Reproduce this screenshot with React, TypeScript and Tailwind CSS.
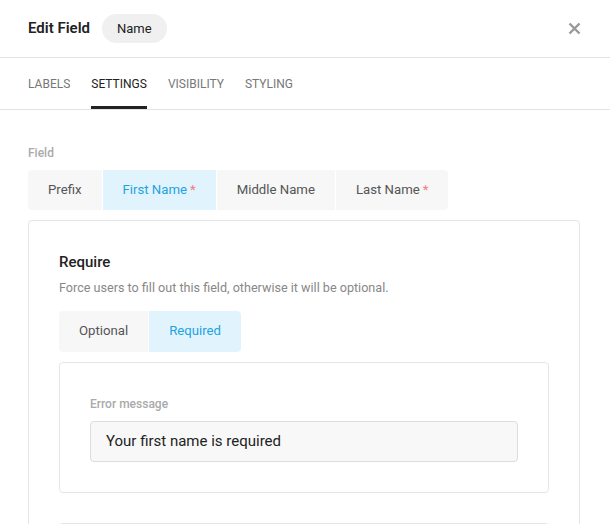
import { useState } from "react";

const tabs = ["Labels", "Settings", "Visibility", "Styling"];

const parts = [
  { name: "Prefix", required: false },
  { name: "First Name", required: true },
  { name: "Middle Name", required: false },
  { name: "Last Name", required: true },
];

function Segment({
  label,
  active,
  required,
  first,
  last,
  onClick,
}: {
  label: string;
  active: boolean;
  required?: boolean;
  first?: boolean;
  last?: boolean;
  onClick: () => void;
}) {
  return (
    <button
      onClick={onClick}
      className={`h-full px-[20px] text-[13.2px] ${first ? "rounded-l-[4px]" : ""} ${
        last ? "rounded-r-[4px]" : ""
      } ${active ? "bg-[#e1f4fd] text-[#1ea3df]" : "bg-[#f7f7f7] text-[#555]"}`}
    >
      {label}
      {required && <span className="ml-[3px] text-[#f47c7c]">*</span>}
    </button>
  );
}

export default function App() {
  const [tab, setTab] = useState("Settings");
  const [part, setPart] = useState("First Name");
  const [mode, setMode] = useState("Required");

  return (
    <div className="min-h-screen bg-white font-['Roboto',sans-serif] text-[#222]">
      {/* Header */}
      <div className="flex h-[58px] items-center border-b border-[#e3e3e3] px-7">
        <h1 className="text-[15px] font-semibold text-[#222]">Edit Field</h1>
        <span className="ml-[12px] rounded-full bg-[#f0f0f0] px-[15px] py-[5px] text-[13px] text-[#222]">
          Name
        </span>
        <button className="ml-auto mr-[1px] text-[#999]">
          <svg width="13" height="13" viewBox="0 0 13 13">
            <path d="M1.5 1.5l10 10M11.5 1.5l-10 10" stroke="currentColor" strokeWidth="2.4" />
          </svg>
        </button>
      </div>

      {/* Tabs */}
      <div className="flex h-[52px] gap-[21px] border-b border-[#e3e3e3] px-7">
        {tabs.map((t) => (
          <button
            key={t}
            onClick={() => setTab(t)}
            className={`flex h-full items-center border-b-[3px] pt-[3px] text-[12px] uppercase ${
              tab === t ? "border-[#222] text-[#222]" : "border-transparent text-[#777]"
            }`}
          >
            {t}
          </button>
        ))}
      </div>

      {/* Body */}
      <div className="px-7 pt-[34px]">
        <div className="mb-[8px] text-[12px] font-medium text-[#aaa]">Field</div>
        <div className="flex h-[40px] gap-px">
          {parts.map((p, i) => (
            <Segment
              key={p.name}
              label={p.name}
              required={p.required}
              active={part === p.name}
              first={i === 0}
              last={i === parts.length - 1}
              onClick={() => setPart(p.name)}
            />
          ))}
        </div>

        <div className="mt-[10px] mr-[2px] rounded-[4px] border border-[#e5e5e5] px-[30px] pt-[30px]">
          <h2 className="text-[15px] font-medium leading-[22px] text-[#222]">Require</h2>
          <p className="mt-[6px] text-[12.6px] text-[#888]">
            Force users to fill out this field, otherwise it will be optional.
          </p>

          <div className="mt-[13px] flex h-[41px] gap-px">
            <Segment label="Optional" first active={mode === "Optional"} onClick={() => setMode("Optional")} />
            <Segment label="Required" last active={mode === "Required"} onClick={() => setMode("Required")} />
          </div>

          <div className="mt-[10px] rounded-[4px] border border-[#e5e5e5] px-[30px] pt-[33px] pb-[30px]">
            <label className="block text-[12px] font-medium leading-[16px] text-[#aaa]">Error message</label>
            <input
              defaultValue="Your first name is required"
              className="mt-[9px] h-[41px] w-full rounded-[4px] border border-[#ddd] bg-[#f8f8f8] px-[15px] text-[15px] text-[#222] outline-none"
            />
          </div>

          <div className="mt-[30px] h-[40px] rounded-t-[4px] border border-b-0 border-[#e5e5e5]" />
        </div>
      </div>
    </div>
  );
}
